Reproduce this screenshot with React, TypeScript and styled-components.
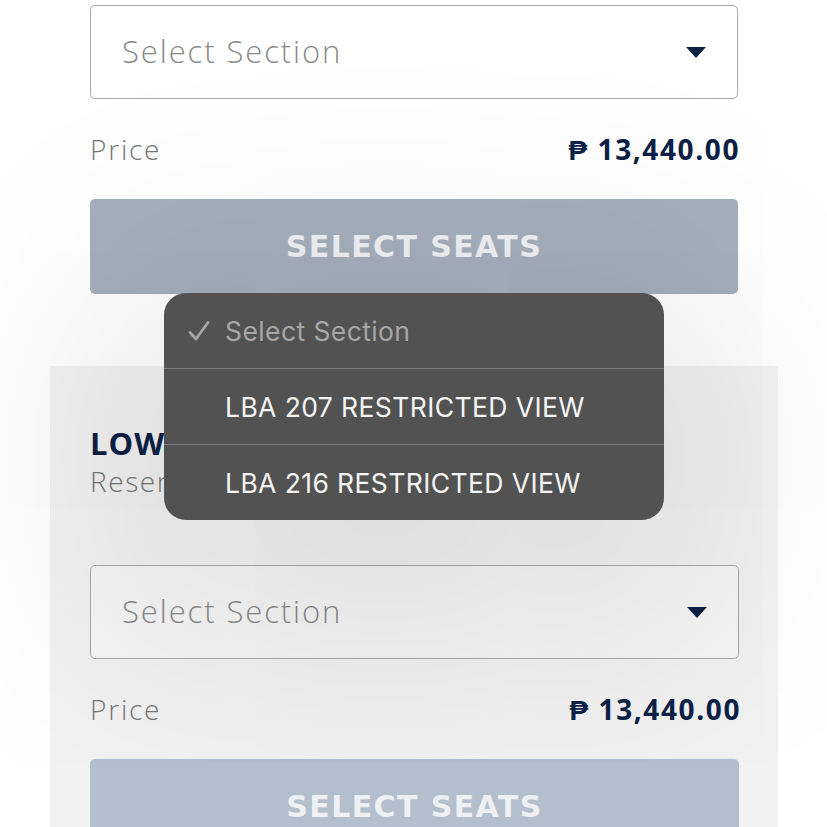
import React from "react";
import styled, { createGlobalStyle } from "styled-components";

const GlobalStyle = createGlobalStyle`
  html, body {
    margin: 0;
    padding: 0;
    background: #ffffff;
    overflow: hidden;
  }
  body {
    font-family: "Open Sans", "Liberation Sans", sans-serif;
  }
`;

const navy = "#0b2146";

const Page = styled.div`
  position: relative;
  width: 827px;
  height: 827px;
  overflow: hidden;
  background: #ffffff;
`;

const TopSection = styled.div`
  display: flex;
  flex-direction: column;
  padding: 5px 89px 0 90px;
`;

const CategoryCard = styled.div`
  margin: 72px 49px 0 50px;
  padding: 58px 39px 0 40px;
  background: #f2f2f2;
  display: flex;
  flex-direction: column;
  height: 600px;
`;

const Heading = styled.div`
  font-weight: 700;
  font-size: 31px;
  line-height: 38px;
  color: ${navy};
  letter-spacing: 1px;
`;

const Subheading = styled.div`
  font-weight: 300;
  font-size: 28px;
  line-height: 38px;
  letter-spacing: 1.6px;
  color: #777;
  margin-bottom: 65px;
`;

const SelectBox = styled.div`
  height: 92px;
  border: 1px solid #a9a9a9;
  border-radius: 5px;
  background: rgba(255, 255, 255, 0.35);
  display: flex;
  align-items: center;
  justify-content: space-between;
  padding: 0 31px 0 31px;
`;

const Placeholder = styled.span`
  font-weight: 300;
  font-size: 31px;
  letter-spacing: 1.9px;
  color: #8a8a8a;
  margin-top: -3px;
`;

const Caret = styled.span`
  width: 0;
  height: 0;
  border-left: 10px solid transparent;
  border-right: 10px solid transparent;
  border-top: 11px solid ${navy};
`;

const PriceRow = styled.div`
  display: flex;
  justify-content: space-between;
  align-items: center;
  height: 100px;
`;

const PriceLabel = styled.span`
  font-weight: 300;
  font-size: 28px;
  letter-spacing: 1.8px;
  color: #777;
`;

const PriceValue = styled.span`
  font-weight: 700;
  font-size: 28px;
  color: ${navy};
  letter-spacing: 1.6px;
  margin-right: -2px;
`;

const SeatButton = styled.div<{ $shade: string }>`
  height: 95px;
  border-radius: 5px;
  background: ${(p) => p.$shade};
  display: flex;
  align-items: center;
  justify-content: center;
  font-family: "DejaVu Sans", "Open Sans", sans-serif;
  font-weight: 700;
  font-size: 30px;
  letter-spacing: 1.4px;
  color: #eef0f3;
`;

const Menu = styled.ul`
  position: absolute;
  left: 164px;
  top: 293px;
  width: 500px;
  margin: 0;
  padding: 0;
  list-style: none;
  background: #525252;
  border-radius: 22px;
  overflow: hidden;
  font-family: Inter, Roboto, sans-serif;
  box-shadow: 0 50px 240px 70px rgba(0, 0, 0, 0.1);
`;

const MenuItem = styled.li<{ $muted?: boolean }>`
  position: relative;
  height: 75px;
  display: flex;
  align-items: center;
  padding-left: 61px;
  font-size: 26.5px;
  letter-spacing: 0.4px;
  font-weight: 400;
  color: ${(p) => (p.$muted ? "#a6a6a6" : "#f4f4f4")};
  & + & {
    border-top: 1px solid #7a7a7a;
  }
`;

const Check = styled.svg`
  position: absolute;
  left: 24px;
  top: 28px;
`;

function SectionPicker() {
  return (
    <>
      <SelectBox>
        <Placeholder>Select Section</Placeholder>
        <Caret />
      </SelectBox>
      <PriceRow>
        <PriceLabel>Price</PriceLabel>
        <PriceValue>₱ 13,440.00</PriceValue>
      </PriceRow>
    </>
  );
}

export default function App() {
  return (
    <Page>
      <GlobalStyle />
      <TopSection>
        <SectionPicker />
        <SeatButton $shade="#a5afbc">SELECT SEATS</SeatButton>
      </TopSection>
      <CategoryCard>
        <Heading>LOWER BOX A</Heading>
        <Subheading>Reserved Seating</Subheading>
        <SectionPicker />
        <SeatButton $shade="#b3bfcd">SELECT SEATS</SeatButton>
      </CategoryCard>
      <Menu>
        <MenuItem $muted>
          <Check width="22" height="20" viewBox="0 0 22 20">
            <path
              d="M2 11.5 L8 18 L20 1.5"
              fill="none"
              stroke="#a6a6a6"
              strokeWidth="2.8"
              strokeLinecap="round"
              strokeLinejoin="round"
            />
          </Check>
          Select Section
        </MenuItem>
        <MenuItem>LBA 207 RESTRICTED VIEW</MenuItem>
        <MenuItem>LBA 216 RESTRICTED VIEW</MenuItem>
      </Menu>
    </Page>
  );
}
